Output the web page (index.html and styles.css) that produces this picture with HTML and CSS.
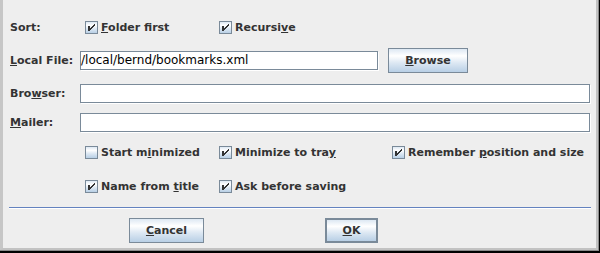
FILE: index.html
```html
<!DOCTYPE html>
<html>
<head>
<meta charset="utf-8">
<link rel="stylesheet" href="styles.css">
</head>
<body>
<div class="frame"><div class="frame2"><div class="win">
  <div class="row r-sort">
    <span class="lbl w75">Sort:</span>
    <span class="cb w134"><span class="box"><svg viewBox="0 0 13 13" width="13" height="13"><path d="M3 5h2v5h-2zM9 3h1v2h-1zM8 4h1v2h-1zM7 5h1v2h-1zM6 6h1v2h-1zM5 7h1v2h-1z"/></svg></span><span class="txt"><u>F</u>older first</span></span>
    <span class="cb"><span class="box"><svg viewBox="0 0 13 13" width="13" height="13"><path d="M3 5h2v5h-2zM9 3h1v2h-1zM8 4h1v2h-1zM7 5h1v2h-1zM6 6h1v2h-1zM5 7h1v2h-1z"/></svg></span><span class="txt">Recursi<u>v</u>e</span></span>
  </div>
  <div class="row r-local">
    <span class="lbl w70"><u>L</u>ocal File:</span>
    <span class="field f-local">/local/bernd/bookmarks.xml</span>
    <span class="btn b-browse"><u>B</u>rowse</span>
  </div>
  <div class="row r-field">
    <span class="lbl w70">Bro<u>w</u>ser:</span>
    <span class="field f-wide"></span>
  </div>
  <div class="row r-field">
    <span class="lbl w70"><u>M</u>ailer:</span>
    <span class="field f-wide"></span>
  </div>
  <div class="row r-cb1">
    <span class="cb w134"><span class="box"></span><span class="txt">Start m<u>i</u>nimized</span></span>
    <span class="cb w173"><span class="box"><svg viewBox="0 0 13 13" width="13" height="13"><path d="M3 5h2v5h-2zM9 3h1v2h-1zM8 4h1v2h-1zM7 5h1v2h-1zM6 6h1v2h-1zM5 7h1v2h-1z"/></svg></span><span class="txt">Minimize to tra<u>y</u></span></span>
    <span class="cb"><span class="box"><svg viewBox="0 0 13 13" width="13" height="13"><path d="M3 5h2v5h-2zM9 3h1v2h-1zM8 4h1v2h-1zM7 5h1v2h-1zM6 6h1v2h-1zM5 7h1v2h-1z"/></svg></span><span class="txt">Remember <u>p</u>osition and size</span></span>
  </div>
  <div class="row r-cb2">
    <span class="cb w134"><span class="box"><svg viewBox="0 0 13 13" width="13" height="13"><path d="M3 5h2v5h-2zM9 3h1v2h-1zM8 4h1v2h-1zM7 5h1v2h-1zM6 6h1v2h-1zM5 7h1v2h-1z"/></svg></span><span class="txt">Name from <u>t</u>itle</span></span>
    <span class="cb"><span class="box"><svg viewBox="0 0 13 13" width="13" height="13"><path d="M3 5h2v5h-2zM9 3h1v2h-1zM8 4h1v2h-1zM7 5h1v2h-1zM6 6h1v2h-1zM5 7h1v2h-1z"/></svg></span><span class="txt">Ask before saving</span></span>
  </div>
  <div class="sep"></div>
  <div class="row r-btns">
    <span class="btn b-cancel"><u>C</u>ancel</span>
    <span class="btn b-ok"><u>O</u>K</span>
  </div>
</div></div></div>
</body>
</html>
```

FILE: styles.css
```css
* { box-sizing: border-box; margin: 0; padding: 0; }
html, body { width: 600px; height: 253px; overflow: hidden; }
body {
  background: #eeeeee;
  font: bold 11px "DejaVu Sans", sans-serif;
  color: #333333;
}
.frame {
  width: 600px;
  height: 253px;
  border-right: 1px solid #000;
  border-bottom: 2px solid #000;
}
.frame2 {
  height: 100%;
  border-right: 1px solid #8a8a8a;
  border-bottom: 1px solid #8a8a8a;
}
.win {
  height: 100%;
  border-left: 3px solid #c6c6c6;
  border-right: 2px solid #c2c2c2;
  border-bottom: 2px solid #c2c2c2;
  padding-left: 7px;
  display: flex;
  flex-direction: column;
}
.row { display: flex; align-items: center; flex: none; }
.r-sort { margin-top: 21px; height: 13px; }
.r-local { margin-top: 14px; height: 25px; }
.r-field { margin-top: 10px; height: 20px; }
.r-field + .r-field { margin-top: 9px; }
.r-cb1 { margin-top: 14px; height: 13px; padding-left: 75px; }
.r-cb2 { margin-top: 21px; height: 13px; padding-left: 75px; }
.r-btns { margin-top: 9px; height: 25px; }

.lbl { white-space: nowrap; flex: none; }
.w75 { width: 75px; }
.w70 { width: 70px; }
.w134 { width: 134px; }
.w173 { width: 173px; }

.cb { display: flex; align-items: center; flex: none; white-space: nowrap; }
.box {
  width: 13px;
  height: 13px;
  flex: none;
  border: 1px solid #7a8a99;
  background: linear-gradient(to bottom, #dde8f3 0%, #ffffff 30%, #dde8f3 60%, #b8cfe5 100%);
  margin-right: 3px;
}
.box svg {
  display: block;
  margin: -1px;
  fill: #333333;
  shape-rendering: crispEdges;
}
.txt { line-height: 13px; }

.field {
  display: block;
  height: 19px;
  background: #fff;
  border: 1px solid #7a8a99;
  box-shadow: 1px 1px 0 #fff;
  font-weight: normal;
  font-size: 12px;
  color: #000;
  padding-left: 0;
  line-height: 17px;
  white-space: nowrap;
  flex: none;
}
.f-local { width: 298px; }
.f-wide { width: 510px; }

.btn {
  display: flex;
  align-items: center;
  justify-content: center;
  height: 25px;
  flex: none;
  border: 1px solid #7a8a99;
  background: linear-gradient(to bottom, #dde8f3 0%, #ffffff 30%, #dde8f3 60%, #b8cfe5 100%);
  color: #333333;
  white-space: nowrap;
}
.b-browse { width: 80px; margin-left: 10px; }
.b-cancel { width: 75px; margin-left: 119px; }
.b-ok { width: 53px; margin-left: 121px; border-width: 2px; }

.sep {
  flex: none;
  margin-top: 14px;
  margin-left: -1px;
  width: 582px;
  height: 2px;
  border-top: 1px solid #6382bf;
  border-bottom: 1px solid #ffffff;
}
```
